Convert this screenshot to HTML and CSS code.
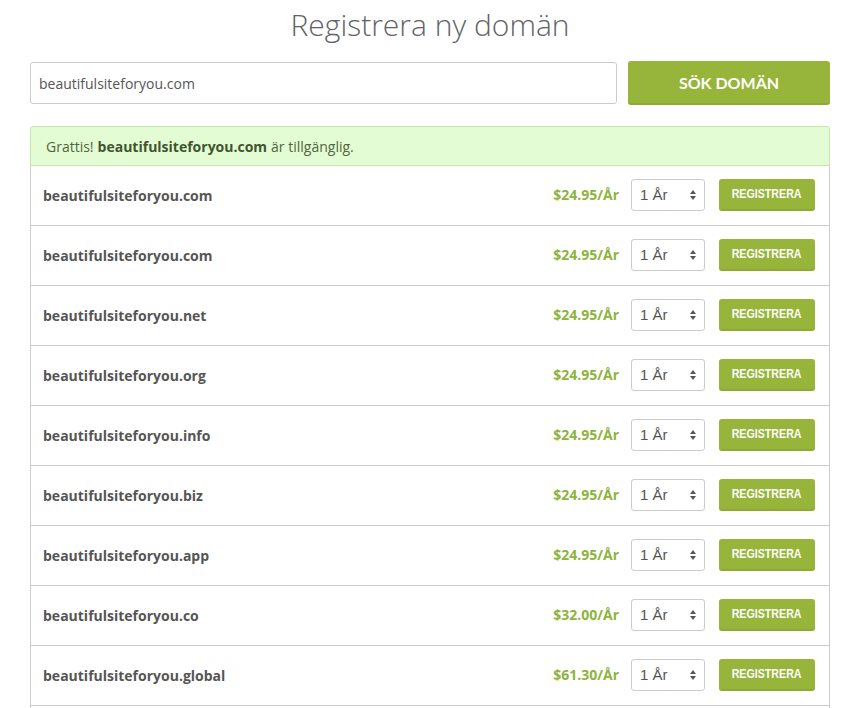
FILE: index.html
```html
<!DOCTYPE html>
<html lang="sv">
<head>
<meta charset="utf-8">
<title>Registrera ny domän</title>
<link rel="stylesheet" href="styles.css">
</head>
<body>
<div class="page">
  <h1 class="title">Registrera ny domän</h1>
  <div class="search">
    <div class="search-input">beautifulsiteforyou.com</div>
    <button class="search-btn">SÖK DOMÄN</button>
  </div>
  <div class="alert">Grattis! <b>beautifulsiteforyou.com</b> är tillgänglig.</div>
  <div class="list">
    <div class="row"><span class="name">beautifulsiteforyou.com</span><span class="price">$24.95/År</span><div class="sel">1 År<svg class="arr" width="8" height="12" viewBox="0 0 8 12"><path d="M4 1 L7 5 H1 Z M4 11 L7 7 H1 Z" fill="#555"/></svg></div><button class="reg"><span>REGISTRERA</span></button></div>
    <div class="row"><span class="name">beautifulsiteforyou.com</span><span class="price">$24.95/År</span><div class="sel">1 År<svg class="arr" width="8" height="12" viewBox="0 0 8 12"><path d="M4 1 L7 5 H1 Z M4 11 L7 7 H1 Z" fill="#555"/></svg></div><button class="reg"><span>REGISTRERA</span></button></div>
    <div class="row"><span class="name">beautifulsiteforyou.net</span><span class="price">$24.95/År</span><div class="sel">1 År<svg class="arr" width="8" height="12" viewBox="0 0 8 12"><path d="M4 1 L7 5 H1 Z M4 11 L7 7 H1 Z" fill="#555"/></svg></div><button class="reg"><span>REGISTRERA</span></button></div>
    <div class="row"><span class="name">beautifulsiteforyou.org</span><span class="price">$24.95/År</span><div class="sel">1 År<svg class="arr" width="8" height="12" viewBox="0 0 8 12"><path d="M4 1 L7 5 H1 Z M4 11 L7 7 H1 Z" fill="#555"/></svg></div><button class="reg"><span>REGISTRERA</span></button></div>
    <div class="row"><span class="name">beautifulsiteforyou.info</span><span class="price">$24.95/År</span><div class="sel">1 År<svg class="arr" width="8" height="12" viewBox="0 0 8 12"><path d="M4 1 L7 5 H1 Z M4 11 L7 7 H1 Z" fill="#555"/></svg></div><button class="reg"><span>REGISTRERA</span></button></div>
    <div class="row"><span class="name">beautifulsiteforyou.biz</span><span class="price">$24.95/År</span><div class="sel">1 År<svg class="arr" width="8" height="12" viewBox="0 0 8 12"><path d="M4 1 L7 5 H1 Z M4 11 L7 7 H1 Z" fill="#555"/></svg></div><button class="reg"><span>REGISTRERA</span></button></div>
    <div class="row"><span class="name">beautifulsiteforyou.app</span><span class="price">$24.95/År</span><div class="sel">1 År<svg class="arr" width="8" height="12" viewBox="0 0 8 12"><path d="M4 1 L7 5 H1 Z M4 11 L7 7 H1 Z" fill="#555"/></svg></div><button class="reg"><span>REGISTRERA</span></button></div>
    <div class="row"><span class="name">beautifulsiteforyou.co</span><span class="price">$32.00/År</span><div class="sel">1 År<svg class="arr" width="8" height="12" viewBox="0 0 8 12"><path d="M4 1 L7 5 H1 Z M4 11 L7 7 H1 Z" fill="#555"/></svg></div><button class="reg"><span>REGISTRERA</span></button></div>
    <div class="row"><span class="name">beautifulsiteforyou.global</span><span class="price">$61.30/År</span><div class="sel">1 År<svg class="arr" width="8" height="12" viewBox="0 0 8 12"><path d="M4 1 L7 5 H1 Z M4 11 L7 7 H1 Z" fill="#555"/></svg></div><button class="reg"><span>REGISTRERA</span></button></div>
    <div class="row row-empty"></div>
  </div>
</div>
</body>
</html>
```
FILE: styles.css
```css
* { box-sizing: border-box; }
html, body { margin: 0; padding: 0; background: #fff; overflow: hidden; }
body { font-family: "Open Sans", "Liberation Sans", sans-serif; color: #555; }
.page { padding: 0 30px; }
.title {
  margin: 0;
  padding-top: 5px;
  height: 61px;
  text-align: center;
  font-weight: 300;
  font-size: 30px;
  line-height: 40px;
  color: #5f6368;
}
.search { display: flex; align-items: center; gap: 11px; height: 44px; }
.search-input {
  flex: 1;
  height: 42px;
  border: 1px solid #ccc;
  border-radius: 3px;
  padding: 0 8px;
  display: flex;
  align-items: center;
  font-size: 14px;
  color: #555;
}
.search-btn {
  width: 202px;
  height: 44px;
  border: none;
  border-radius: 3px;
  background: #96b53a;
  color: #fff;
  font-family: Lato, "Open Sans", sans-serif;
  font-weight: 700;
  font-size: 16px;
  padding: 0 0 2px;
  box-shadow: inset 0 -2px 0 rgba(0,0,0,0.06);
}
.alert {
  margin-top: 21px;
  height: 40px;
  border: 1px solid #c5e8b0;
  border-radius: 3px 3px 0 0;
  background: #e4fcd3;
  color: #4f6540;
  font-size: 14px;
  padding: 0 15px;
  display: flex;
  align-items: center;
  gap: 4px;
}
.alert b { color: #3f5430; font-weight: 700; }
.list { border-left: 1px solid #ccc; border-right: 1px solid #ccc; }
.row {
  height: 60px;
  border-bottom: 1px solid #ccc;
  display: flex;
  align-items: center;
  padding: 0 14px 0 12px;
}
.row-empty { border-bottom: none; }
.name { flex: 1; font-weight: 700; font-size: 14px; color: #555; }
.price { color: #8db43c; font-weight: 700; font-size: 14px; margin-right: 12px; margin-top: -3px; }
.sel {
  width: 74px;
  height: 32px;
  border: 1px solid #ccc;
  border-radius: 3px;
  background: #fff;
  display: flex;
  align-items: center;
  justify-content: space-between;
  padding: 0 7px 0 8px;
  font-family: "Liberation Sans", Arial, sans-serif;
  font-size: 15px;
  color: #555;
  margin-right: 14px;
  margin-top: -2px;
}
.arr { display: block; margin-top: 1px; }
.reg {
  width: 96px;
  height: 32px;
  border: none;
  border-radius: 3px;
  background: #96b53a;
  color: #fff;
  font-family: "Liberation Sans", Arial, sans-serif;
  font-weight: 700;
  font-size: 13px;
  padding: 0 0 3px;
  margin-top: -2px;
  box-shadow: inset 0 -2px 0 rgba(0,0,0,0.06);
  white-space: nowrap;
}
.reg span { display: inline-block; transform: scaleX(0.82); }
```
